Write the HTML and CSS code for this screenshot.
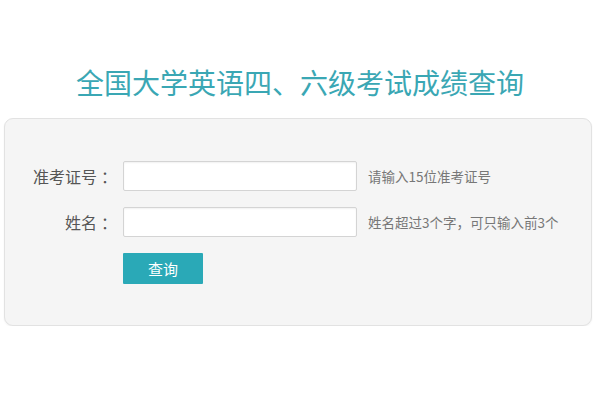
FILE: index.html
```html
<!DOCTYPE html>
<html lang="zh-CN">
<head>
    <meta charset="UTF-8">
    <meta name="viewport" content="width=device-width, initial-scale=1.0">
    <title>全国大学英语四、六级考试成绩查询</title>
    <link rel="stylesheet" href="styles.css">
</head>
<body>
    <h1 class="page-title">全国大学英语四、六级考试成绩查询</h1>
    <div class="query-box">
        <div class="form-row">
            <label class="form-label" for="zkzh">准考证号<span class="colon">：</span></label>
            <input type="text" class="form-input" id="zkzh" maxlength="15">
            <span class="form-tip">请输入15位准考证号</span>
        </div>
        <div class="form-row">
            <label class="form-label" for="xm">姓名<span class="colon">：</span></label>
            <input type="text" class="form-input" id="xm">
            <span class="form-tip">姓名超过3个字，可只输入前3个</span>
        </div>
        <div class="form-row">
            <span class="form-label"></span>
            <button class="query-btn">查询</button>
        </div>
    </div>
</body>
</html>
```
FILE: styles.css
```css
/* CSS styles */
body {
    margin: 0;
    padding: 0;
    background-color: #fff;
    font-family: "Noto Sans CJK SC", "Noto Sans", sans-serif;
    color: #555;
}

.page-title {
    margin: 0;
    padding-top: 62px;
    height: 56px;
    box-sizing: content-box;
    line-height: 40px;
    font-size: 28px;
    font-weight: normal;
    color: #3aa7b4;
    text-align: center;
}

.query-box {
    width: 588px;
    margin-left: 4px;
    padding: 42px 0 41px;
    box-sizing: border-box;
    background-color: #f5f5f5;
    border: 1px solid #e2e2e2;
    border-radius: 9px;
    box-shadow: 0 1px 2px rgba(0, 0, 0, 0.06);
}

.form-row {
    display: flex;
    align-items: center;
    margin-bottom: 16px;
}

.form-row:last-child {
    margin-bottom: 0;
}

.form-label {
    width: 108px;
    margin-right: 10px;
    text-align: right;
    font-size: 16px;
    color: #555;
}

/* 冒号居中显示 */
.form-label .colon {
    display: inline-block;
    width: 16px;
    padding-left: 4px;
    margin-right: -4px;
    text-align: left;
}

.form-input {
    width: 234px;
    height: 30px;
    padding: 0 6px;
    margin: 0;
    border: 1px solid #d4d4d4;
    border-radius: 2px;
    box-sizing: border-box;
    background-color: #fff;
    box-shadow: inset 0 1px 2px rgba(0, 0, 0, 0.06);
}

.form-tip {
    margin-left: 11px;
    font-size: 13.5px;
    color: #777;
}

.query-btn {
    width: 80px;
    height: 31px;
    padding: 0;
    border: none;
    border-radius: 1px;
    background-color: #2aa9b7;
    color: #fff;
    font-family: "Noto Sans CJK SC", "Noto Sans", sans-serif;
    font-size: 15px;
    cursor: pointer;
}

.query-btn:hover {
    background-color: #22979f;
}
```
